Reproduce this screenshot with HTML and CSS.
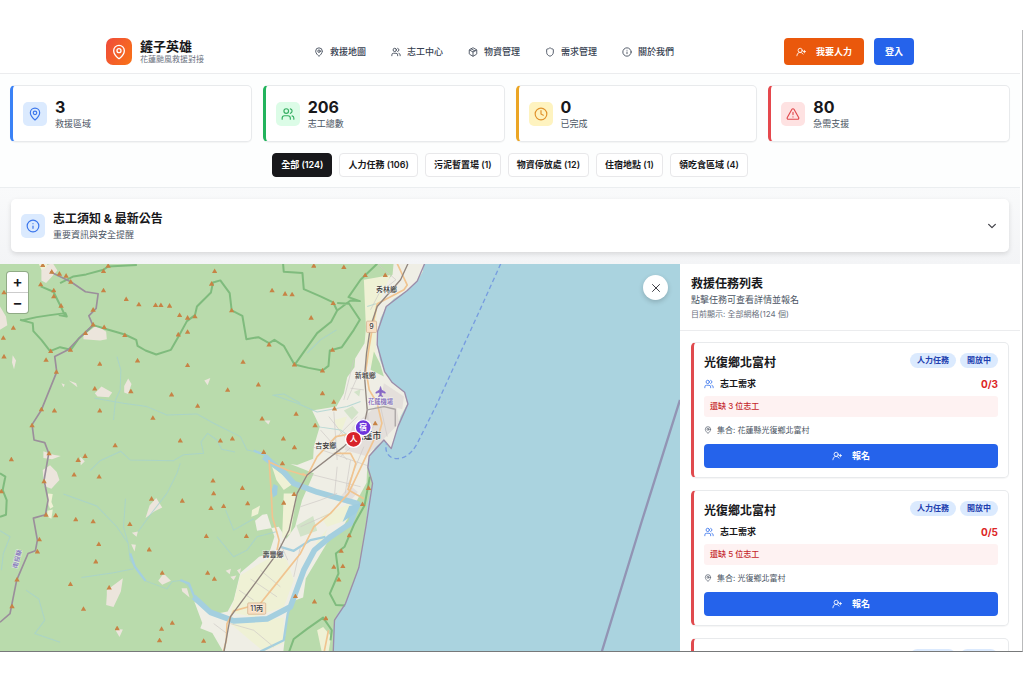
FILE: index.html
```html
<!DOCTYPE html>
<html lang="zh-Hant">
<head>
<meta charset="utf-8">
<meta name="viewport" content="width=device-width, initial-scale=1">
<title>鏟子英雄</title>
<link rel="stylesheet" href="styles.css">
</head>
<body>
<svg class="sprite" aria-hidden="true">
  <symbol id="i-pin" viewBox="0 0 24 24"><path d="M20 10c0 5-5.500 10.200-7.400 11.800a1 1 0 0 1-1.200 0C9.500 20.200 4 15 4 10a8 8 0 0 1 16 0"/><circle cx="12" cy="10" r="3"/></symbol>
  <symbol id="i-users" viewBox="0 0 24 24"><path d="M16 21v-2a4 4 0 0 0-4-4H6a4 4 0 0 0-4 4v2M22 21v-2a4 4 0 0 0-3-3.870M16 3.130a4 4 0 0 1 0 7.750"/><circle cx="9" cy="7" r="4"/></symbol>
  <symbol id="i-add" viewBox="0 0 24 24"><path d="M2 21a8 8 0 0 1 15-4M20 8v6M23 11h-6"/><circle cx="10" cy="8" r="5"/></symbol>
  <symbol id="i-box" viewBox="0 0 24 24"><path d="M11 21.700a2 2 0 0 0 2 0l7-4a2 2 0 0 0 1-1.700V8a2 2 0 0 0-1-1.700l-7-4a2 2 0 0 0-2 0l-7 4A2 2 0 0 0 3 8v8a2 2 0 0 0 1 1.700zM12 22V12M3.300 7 12 12l8.700-5M7.500 4.300l9 5.100"/></symbol>
  <symbol id="i-shield" viewBox="0 0 24 24"><path d="M20 13c0 5-3.500 7.500-7.700 9a1 1 0 0 1-.6 0C7.500 20.500 4 18 4 13V6a1 1 0 0 1 1-1c2 0 4.500-1.200 6.200-2.700a1.200 1.200 0 0 1 1.600 0C14.500 3.800 17 5 19 5a1 1 0 0 1 1 1z"/></symbol>
  <symbol id="i-info" viewBox="0 0 24 24"><circle cx="12" cy="12" r="10"/><path d="M12 16v-4M12 8h.01"/></symbol>
  <symbol id="i-clock" viewBox="0 0 24 24"><circle cx="12" cy="12" r="10"/><path d="M12 6v6l4 2"/></symbol>
  <symbol id="i-alert" viewBox="0 0 24 24"><path d="m21.700 18-8-14a2 2 0 0 0-3.500 0l-8 14A2 2 0 0 0 4 21h16a2 2 0 0 0 1.700-3M12 9v4M12 17h.01"/></symbol>
  <symbol id="i-down" viewBox="0 0 24 24"><path d="m4 8 8 8 8-8"/></symbol>
  <symbol id="i-x" viewBox="0 0 24 24"><path d="M19 5 5 19M5 5l14 14"/></symbol>
</svg>
<div class="app">
  <header class="header">
    <div class="header-inner">
      <a class="brand" href="#">
        <span class="brand-mark"><svg class="icon icon-lg"><use href="#i-pin"/></svg></span>
        <span class="brand-text"><strong class="brand-name">鏟子英雄</strong><span class="brand-sub">花蓮颱風救援對接</span></span>
      </a>
      <nav class="nav">
        <a href="#"><svg class="icon"><use href="#i-pin"/></svg>救援地圖</a>
        <a href="#"><svg class="icon"><use href="#i-users"/></svg>志工中心</a>
        <a href="#"><svg class="icon"><use href="#i-box"/></svg>物資管理</a>
        <a href="#"><svg class="icon"><use href="#i-shield"/></svg>需求管理</a>
        <a href="#"><svg class="icon"><use href="#i-info"/></svg>關於我們</a>
      </nav>
      <div class="actions">
        <button class="btn btn-orange"><svg class="icon"><use href="#i-add"/></svg>我要人力</button>
        <button class="btn btn-blue">登入</button>
      </div>
    </div>
  </header>

  <section class="summary">
    <div class="stats">
      <div class="stat blue"><span class="tile"><svg class="icon icon-md"><use href="#i-pin"/></svg></span><div><div class="stat-num">3</div><div class="stat-label">救援區域</div></div></div>
      <div class="stat green"><span class="tile"><svg class="icon icon-md"><use href="#i-users"/></svg></span><div><div class="stat-num">206</div><div class="stat-label">志工總數</div></div></div>
      <div class="stat amber"><span class="tile"><svg class="icon icon-md"><use href="#i-clock"/></svg></span><div><div class="stat-num">0</div><div class="stat-label">已完成</div></div></div>
      <div class="stat red"><span class="tile"><svg class="icon icon-md"><use href="#i-alert"/></svg></span><div><div class="stat-num">80</div><div class="stat-label">急需支援</div></div></div>
    </div>
    <div class="filters">
      <button class="filter active">全部 (124)</button>
      <button class="filter">人力任務 (106)</button>
      <button class="filter">污泥暫置場 (1)</button>
      <button class="filter">物資停放處 (12)</button>
      <button class="filter">住宿地點 (1)</button>
      <button class="filter">領吃食區域 (4)</button>
    </div>
  </section>

  <section class="notice-wrap">
    <button class="notice">
      <span class="tile tile-blue"><svg class="icon icon-md"><use href="#i-info"/></svg></span>
      <span class="notice-text"><strong class="notice-title">志工須知 &amp; 最新公告</strong><span class="notice-sub">重要資訊與安全提醒</span></span>
      <svg class="icon chevron"><use href="#i-down"/></svg>
    </button>
  </section>

  <main class="main">
    <div class="map">
      <svg class="map-canvas" viewBox="0 12 2037 1161" preserveAspectRatio="xMidYMid slice" role="img" aria-label="花蓮地圖">
        <defs>
          <marker id="peak" viewBox="0 0 14 13" refX="7" refY="7" markerWidth="16" markerHeight="15" markerUnits="userSpaceOnUse"><path class="peak" d="M7 0 14 12H0z"/></marker>
        </defs>
        <rect class="sea" y="12" width="2037" height="1161"/>
        <path class="forest" d="M0 0H1272L1266 36 1250 64 1220 92 1180 117 1157 140 1140 175 1131 215 1130 255 1138 300 1152 335 1175 368 1212 397 1220 432 1200 470 1190 505 1172 566 1150 540 1125 560 1106 588 1102 622 1115 655 1114 680 1100 735 1096 800 1089 850 1075 922 1052 990 1035 1030 1010 1062 999 1105 1000 1180H0z"/>
        <path class="urban" d="M1180 0 1176 44 1150 75 1127 105 1120 145 1098 195 1092 250 1064 296 1062 322 1040 352 1030 400 1008 440 935 452 958 500 940 560 938 596 890 615 870 612 940 640 905 720 884 800 858 836 835 800 770 812 764 782 786 764 800 762 822 830 806 880 776 890 720 938 700 1020 682 1054 640 1062 582 1024 606 1088 600 1104 636 1118 672 1180H848L862 1060 885 1020 908 1012 916 955 985 840 1030 796 1070 720 1098 668 1100 622 1106 588 1125 560 1150 540 1172 566 1190 505 1200 470 1220 432 1212 397 1175 368 1152 335 1138 300 1130 255 1131 215 1140 175 1157 140 1180 117 1220 92 1250 64 1266 36 1272 0z"/>
        <path class="field" d="M830 880 720 945 704 1010 690 1056 760 1070 850 1040 880 960 860 900zM690 1090 850 1072 848 1150 790 1174zM850 700 890 700 870 820 845 835zM960 770 1048 730 1040 780 980 800zM1090 60 1170 46 1130 140 1122 330 1094 300 1096 200zM1000 480 1040 470 1020 520zM815 620 880 670 850 690 828 660zM755 750l24-14-6 26-20 8z"/>
        <path class="forest" d="M1120 275 1138 310 1150 350 1110 330zM1125 465l24 10 10 40-14 5-20-24z"/>
        <path class="park" d="M1030 452l26-14 18 20-20 22zM1060 396l20-8-4 22zM888 796l50-28 12 44-50 18z"/>
        <path class="town" d="M1056 500l70-60 60-10 10 60-50 50-50 48-64-18zM1150 370l60 40-5 38-66-18zM1012 720l36-44 24 20-30 36z"/>
        <path class="field" d="M945 850l36-44-20 52zM950 1110l18-10 24 28-8 48h-20z"/>
        <path class="rock" d="M250 226l40-30 28 20 2 22-20 4-50-4zM284 400l20-20 32 18-10 14-34-2zM372 378l12-22 10 16-10 30-12-4zM128 630l22-14 20 20 8 24-24 26-22-8zM468 714l18 28-24 12-26 20 12-38zM320 990l40-30 8-6-6 40-22 46-22-6 2-30zM474 962l16-22 22 22-26 12zM544 984l16 0 8 28-22-18zM124 22l34-12 14 22-34 38-14-8zM130 574l30 10 22 4-26 10-26-4zM395 818l18-4-4 16zM393 852l14 2-4 20zM612 362l18-8-8 22zM184 370l10 4-4 8zM206 362l22 8 4 12zM344 1106l24 2-10 22zM792 482l18 0-6 12zM240 590l14 14-12 12zM0 140l18 30 4 26-22 14zM38 286l10 16-6 26-6-20zM676 932l16-6-4 16zM710 930l12-6-4 18zM690 950l18-4-8 14z"/>
        <path class="field" d="M144 700l14 2-4 24 6 14-10 6-8-20zM142 752l16-4-4 28-12-6zM114 8l28 4-4 12-14 6z"/>

        <path class="stream" d="M284 415 370 430 440 440 500 465 590 462 640 490 720 530 740 570 790 580M350 290 362 330 360 390 346 420 340 480M270 632 300 602 362 574 390 600 520 602 550 584 610 580 602 546 622 520 650 540 664 568 704 576M190 702 290 738 350 800 384 850 390 900 436 962M436 962 500 986 516 964 546 960 570 984M384 850 370 800 376 716M414 814 450 764 500 700 530 640 540 610M244 952 340 938 400 926M78 990 116 1016 134 1080 104 1120 180 1146M650 830 700 890 740 870 770 830 830 814M676 750 700 810 760 776M816 406 850 402 900 430M0 812 30 830 10 880 4 930M1008 210 960 240 920 280M820 406 890 430 950 456 1040 440 1080 425M950 500 1020 510 1060 540M1100 140 1126 132"/>
        <path class="river-s" d="M390 880 404 920 436 962M540 960 566 970 582 1010M760 572 800 588 850 640M840 860 880 872 930 840 975 830M780 1174 850 1140 862 1060 900 960"/>
        <path class="river" d="M790 590 850 636 880 670 950 696 1070 730 1050 790 990 830 942 870 910 930 870 1040 800 1076 700 1082 630 1056 580 1010"/>
        <path class="lake" d="M820 672l12 6-2 26-12 8-4-22zM1046 738l38-10-14 28-44 30z"/>

        <path class="minor" d="M1130 12 1186 60 1136 100 1110 150M1000 455 1010 600M960 510 1040 600M985 470 1056 560M935 560 1110 620M920 640 1080 680M1010 620 1002 706M1050 600 1034 700M780 930 840 980M750 956 830 1010M716 990 760 1020M690 1090 760 1110 820 1160M640 1090 680 1120M900 740 960 720 1010 700M900 860 880 950M1060 300 1030 420M1080 330 1040 420M1140 440 1160 530M1100 440 1105 520M1050 385 1090 390M1020 590 1120 500M900 800 990 760M840 850 862 900M970 570 1070 470M1090 560 1040 680"/>
        <path class="road" d="M1190 12 1220 76 1210 90 1130 132 1118 190 1106 260 1096 330 1106 390 1130 430 1144 490 1130 540M806 600 812 690 816 770 836 840 830 870M806 606 860 630 920 648 950 590 1006 530 1060 520M920 648 906 640M1120 540 1044 700 990 760 940 800 900 880 820 980 780 1030 700 1052 680 1090 678 1140 668 1180M1044 690 1090 716M1000 580 1050 580 1066 610 1042 690M984 1110 970 1180"/>
        <path class="rail" d="M1222 12 1200 60 1130 140 1110 200 1098 280 1092 350 1100 450 1090 500 1030 560 920 645 890 700 866 810 830 880 690 1070 670 1180"/>
        <path class="rail light" d="M1100 450 1150 440 1184 448 1184 500"/>

        <path class="boundary" d="M60 180 98 190 100 214 124 240 150 274 180 262 212 270 236 236 280 196 312 206 374 224 408 240 412 258 436 272 468 284 512 270 536 228 560 184 584 166 590 140 632 98 638 68 660 62 688 100 694 152 726 168 738 238 774 232 806 250 822 240 850 258 882 314 924 324 966 332 984 318 988 272 1024 262 1060 210 1078 180 1046 132 1010 130M848 12 850 36 906 40 910 88 960 110 998 128 1010 152 992 186 950 220 882 316M1010 152 1050 122 1078 124 1044 112 1080 60 1130 12M64 182 110 172 150 166 196 160 200 170 176 166M196 170 182 140 160 96 122 80M180 70 220 50 258 44 310 30 324 20 410 16M0 640 16 650 8 690 20 720 18 764 0 770M864 1180 880 1136 920 1106 968 1072 994 1110 990 1140M1108 650 1092 736 1062 790 1032 860 1006 880 1014 940 988 1000 1006 1034 1034 1036"/>
        <path class="admin" d="M150 36 212 66 256 96 294 102 288 146 266 168 278 196 236 236 204 270 164 290 170 336 124 450 96 494 102 540 134 548 146 580 132 660 144 720 136 764 100 774 112 840 106 872 84 880 50 960 30 1060 0 1086"/>
        <path class="shore" d="M1272 12 1250 64 1220 92 1157 140 1131 215 1130 255 1152 335 1175 368 1212 397 1222 432 1192 500 1172 566 1150 540 1106 588 1102 622 1116 670 1096 800 1075 922 1035 1030 1002 1080 998 1180"/>
        <path class="maritime" d="M2037 420 1922 785 1803 1173"/>
        <path class="ferry" d="M1500 12 1440 145 1310 430 1250 550Q1220 605 1175 594 1150 580 1158 550"/>

        <path class="peaks" d="M128 16 155 36 178 42 198 48 212 66 122 74 161 92 161 110 183 138 12 98 310 34 324 18 310 92 378 118 416 134 466 136 482 136 508 138 538 166 562 174 584 170 534 224 562 216 634 72 643 34 694 152 815 92 854 102 875 104 279 150 279 194 312 202 256 220 374 226 40 204 10 234 12 290 152 274 211 270 138 300 169 336 299 312 412 302 562 316 728 306 806 254 882 314 284 386 392 394 514 404 592 438 682 390 774 374 124 448 163 452 299 452 458 474 96 496 540 542 660 542 696 536 785 476 887 462 345 556 147 580 255 588 234 600 34 598 222 644 297 650 132 664 638 662 640 700 726 684 742 730 670 738 632 744 546 722 454 716 4 694 138 764 167 766 227 778 279 784 389 792 618 828 738 828 447 868 296 852 118 838 112 874 287 904 486 938 622 938 642 956 211 972 327 982 51 958 36 1038 250 1046 516 1088 484 1106 351 1104 478 1140 610 1142 790 576 849 536 882 562 846 610 850 728 881 702 885 1008 940 18 1030 22 1094 46 1154 46 932 174 998 130 996 270 966 332 966 400 1000 426 1002 446 944 496 1124 490 1104 684 1086 732 1046 826 1022 872 1000 920 1027 918 1015 958 942 1024 976 1074"/>

        <g class="shield-tag"><rect x="1098" y="184" width="30" height="34" rx="3"/><rect x="742" y="1028" width="54" height="34" rx="3"/></g>
        <g class="labels">
          <text x="1113" y="208">9</text><text x="769" y="1053">11丙</text>
          <text x="1158" y="96">秀林鄉</text><text x="1094" y="354">新城鄉</text><text x="976" y="564">吉安鄉</text><text x="818" y="890">壽豐鄉</text>
          <text class="city" x="1102" y="538">花蓮市</text>
          <text class="violet" x="1140" y="432">花蓮機場</text>
          <text class="violet" transform="translate(58 898) rotate(-75)">南投縣</text>
        </g>
        <path class="plane" d="M1140 380l3 10 11 7v3l-11-3-1 8 4 3v2l-6-2-6 2v-2l4-3-1-8-11 3v-3l11-7z"/>
        <circle class="pin violet-pin" cx="1088" cy="503" r="24"/><text class="pin-text" x="1088" y="511">宿</text>
        <circle class="pin red-pin" cx="1059" cy="538" r="24"/><text class="pin-text" x="1059" y="546">人</text>
      </svg>
      <div class="zoom"><button aria-label="放大">+</button><button aria-label="縮小">−</button></div>
      <button class="close" aria-label="關閉"><svg class="icon icon-md"><use href="#i-x"/></svg></button>
    </div>

    <aside class="side">
      <div class="side-head">
        <h2>救援任務列表</h2>
        <p>點擊任務可查看詳情並報名</p>
        <p class="tiny">目前顯示: 全部網格(124 個)</p>
      </div>
      <div class="tasks">
        <article class="task">
          <div class="row"><h3>光復鄉北富村</h3><div class="badges"><span class="badge">人力任務</span><span class="badge">開放中</span></div></div>
          <div class="row need"><span class="need-label"><svg class="icon"><use href="#i-users"/></svg>志工需求</span><span class="count">0/3</span></div>
          <div class="short">還缺 3 位志工</div>
          <div class="place"><svg class="icon icon-sm"><use href="#i-pin"/></svg>集合: 花蓮縣光復鄉北富村</div>
          <button class="btn btn-blue join"><svg class="icon"><use href="#i-add"/></svg>報名</button>
        </article>
        <article class="task">
          <div class="row"><h3>光復鄉北富村</h3><div class="badges"><span class="badge">人力任務</span><span class="badge">開放中</span></div></div>
          <div class="row need"><span class="need-label"><svg class="icon"><use href="#i-users"/></svg>志工需求</span><span class="count">0/5</span></div>
          <div class="short">還缺 5 位志工</div>
          <div class="place"><svg class="icon icon-sm"><use href="#i-pin"/></svg>集合: 光復鄉北富村</div>
          <button class="btn btn-blue join"><svg class="icon"><use href="#i-add"/></svg>報名</button>
        </article>
        <article class="task">
          <div class="row"><h3></h3><div class="badges"><span class="badge badge-wide"></span><span class="badge"></span></div></div>
        </article>
      </div>
    </aside>
  </main>
</div>
</body>
</html>
```
FILE: styles.css
```css
* { box-sizing: border-box; }
body {
  margin: 0;
  height: 100vh;
  padding: 30px 1px 31px 0;
  display: flex;
  background: #fff;
  color: #18181b;
  font: 9px/14px Inter, "Noto Sans CJK TC", sans-serif;
}
button { font: inherit; color: inherit; border: 0; background: none; padding: 0; cursor: pointer; }
a { color: inherit; text-decoration: none; }
h2, h3, p { margin: 0; }
.sprite { position: absolute; width: 0; height: 0; }
.icon { width: 10px; height: 10px; flex: none; fill: none; stroke: currentColor; stroke-width: 2; stroke-linecap: round; stroke-linejoin: round; }
.icon-sm { width: 8px; height: 8px; }
.icon-md { width: 14px; height: 14px; }
.icon-lg { width: 16px; height: 16px; }

.app {
  flex: 1;
  min-width: 0;
  display: flex;
  flex-direction: column;
  padding-right: 2px;
  border-right: 1px solid #b9babb;
  border-bottom: 1px solid #77797a;
}

/* Header */
.header { border-bottom: 1px solid #ebecee; }
.header-inner { max-width: 808px; margin: 0 auto; padding: 8px 0; display: flex; align-items: center; justify-content: space-between; }
.brand { display: flex; align-items: center; gap: 8px; }
.brand-mark { width: 26px; height: 27px; border-radius: 7px; display: grid; place-items: center; color: #fff; background: linear-gradient(120deg, #ef4b3b, #f97316); }
.brand-text { display: flex; flex-direction: column; }
.brand-name { font-size: 13px; line-height: 16px; font-weight: 700; }
.brand-sub { font-size: 8px; line-height: 11px; color: #6b7280; }
.nav { display: flex; gap: 25px; font-weight: 500; color: #374151; }
.nav a { display: flex; align-items: center; gap: 6px; }
.actions { display: flex; gap: 10px; }
.btn { display: flex; align-items: center; justify-content: center; gap: 10px; border-radius: 4px; color: #fff; font-weight: 600; }
.btn-orange { background: #ea580c; padding: 6px 12px; height: 27px; }
.btn-blue { background: #2563eb; padding: 5px 11px; }

/* Stats and filters */
.summary { padding: 11px 10px 10px; background: #fdfefe; border-bottom: 1px solid #ebeef0; }
.stats { display: grid; grid-template-columns: repeat(4, 1fr); gap: 11px; }
.stat { display: flex; align-items: center; gap: 8px; height: 57px; padding-left: 10px; background: #fff; border: 1px solid #e8eaec; border-left: 3px solid; border-radius: 5px; box-shadow: 0 1px 1px #0000000a; }
.tile { width: 24px; height: 24px; flex: none; border-radius: 5px; display: grid; place-items: center; }
.stat-num { font-size: 16px; line-height: 20px; font-weight: 700; }
.stat-label { line-height: 14px; color: #4b5563; }
.blue { border-left-color: #3b82f6; }
.blue .tile, .tile-blue { background: #dbeafe; color: #3b76ec; }
.green { border-left-color: #22b35c; }
.green .tile { background: #dcfce7; color: #35ae62; }
.amber { border-left-color: #eba524; }
.amber .tile { background: #fef3c0; color: #e0922c; }
.red { border-left-color: #e5484d; }
.red .tile { background: #fee2e2; color: #e04a4e; }
.filters { display: flex; justify-content: center; gap: 7px; margin-top: 11px; }
.filter { height: 24px; padding: 0 8px; background: #fff; border: 1px solid #e8e8ea; border-radius: 4px; font-weight: 600; white-space: nowrap; }
.filter.active { background: #18181b; border-color: #18181b; color: #fff; }

/* Announcement */
.notice-wrap { padding: 11px 11px 12px; background: linear-gradient(#f9fafb, #f3f4f6); }
.notice { width: 100%; height: 53px; padding: 0 12px 0 10px; display: flex; align-items: center; gap: 8px; text-align: left; background: #fff; border-radius: 5px; box-shadow: 0 2px 5px #0000001f; }
.notice-text { flex: 1; display: flex; flex-direction: column; }
.notice-title { font-size: 12px; line-height: 18px; font-weight: 700; }
.notice-sub { line-height: 14px; color: #4b5563; }
.chevron { stroke-width: 3; color: #3f3f46; }

/* Map */
.main { flex: 1; min-height: 0; display: grid; grid-template-columns: 2fr 1fr; }
.map { position: relative; overflow: hidden; }
.map-canvas { display: block; width: 100%; height: 100%; }
.map-canvas path { fill: none; stroke-linejoin: round; }
.sea { fill: #aad3df; }
.map-canvas .forest { fill: #b9dbac; }
.map-canvas .urban { fill: #efeee5; }
.map-canvas .field { fill: #eff1d5; }
.map-canvas .park { fill: #d2e3c8; }
.map-canvas .town { fill: #e4dfdb; }
.map-canvas .rock { fill: #ece5dc; }
.map-canvas .lake { fill: #9fcddf; }
.stream { stroke: #a6d2cf; stroke-width: 3; opacity: .75; }
.river-s { stroke: #a4cfdf; stroke-width: 7; }
.river { stroke: #a4cfdf; stroke-width: 17; }
.minor { stroke: #cdc9c6; stroke-width: 2; }
.road { stroke: #f0c490; stroke-width: 5; }
.rail { stroke: #91867f; stroke-width: 4; }
.rail.light { stroke: #aaa5a5; }
.boundary { stroke: #7fbb7d; stroke-width: 6; }
.admin { stroke: #9b8e9b; stroke-width: 5; }
.shore { stroke: #9c8daa; stroke-width: 4; }
.maritime { stroke: #9294b4; stroke-width: 7; }
.ferry { stroke: #779de0; stroke-width: 4; stroke-dasharray: 14 9; }
.peaks { stroke: none; marker-start: url(#peak); marker-mid: url(#peak); marker-end: url(#peak); }
.map-canvas .peak { fill: #c78345; }
.shield-tag { fill: #f8dfc3; stroke: #cfac8a; stroke-width: 2; }
.labels { font-size: 21px; font-weight: 500; text-anchor: middle; fill: #38383a; paint-order: stroke; stroke: #ffffff99; stroke-width: 3; }
.labels .city { font-size: 27px; }
.labels .violet { font-size: 19px; fill: #7a66b8; }
.map-canvas .plane { fill: #8565c4; stroke: #8565c4; stroke-width: 2; }
.pin { stroke: #fff; stroke-width: 4; }
.violet-pin { fill: #6d35dc; }
.red-pin { fill: #d8232a; }
.pin-text { font-size: 23px; font-weight: 700; text-anchor: middle; fill: #fff; }
.zoom { position: absolute; top: 8px; left: 7px; width: 21px; display: flex; flex-direction: column; background: #fff; border-radius: 3px; box-shadow: 0 0 0 1px #00000038; }
.zoom button { height: 20px; font-size: 15px; font-weight: 600; }
.zoom button + button { border-top: 1px solid #ccc; height: 21px; }
.close { position: absolute; top: 11px; right: 12px; width: 25px; height: 25px; display: grid; place-items: center; background: #fff; border-radius: 50%; box-shadow: 0 2px 5px #00000030; color: #3f3f46; }
.close .icon { width: 12px; height: 12px; }

/* Task list */
.side { min-height: 0; display: flex; flex-direction: column; overflow: hidden; background: #fff; }
.side-head { padding: 11px 11px 9px; border-bottom: 1px solid #ebecee; color: #4b5563; }
.side-head h2 { font-size: 12px; line-height: 18px; color: #18181b; }
.side-head .tiny { font-size: 8px; color: #6b7280; }
.tasks { flex: 1; min-height: 0; overflow: hidden; padding: 11px 11px 0; }
.task { min-height: 136px; margin-bottom: 12px; padding: 10px 10px 0; border: 1px solid #e8eaec; border-left: 3px solid #e04a4e; border-radius: 5px; box-shadow: 0 1px 1px #0000000a; }
.row { display: flex; align-items: center; justify-content: space-between; }
.task h3 { font-size: 12px; line-height: 20px; }
.badges { display: flex; gap: 4px; align-self: flex-start; }
.badge { min-width: 38px; height: 15px; padding: 0 7px; border-radius: 8px; background: #dbeafe; color: #1e40af; font-size: 8px; line-height: 15px; font-weight: 600; }
.badge-wide { min-width: 46px; }
.need { height: 14px; margin-top: 4px; font-weight: 600; }
.need-label { display: flex; align-items: center; gap: 6px; }
.need .icon { color: #3b76ec; }
.count { font-size: 10px; font-weight: 700; color: #dc2626; }
.short { margin-top: 5px; padding: 3px 6px; height: 21px; background: #fef2f2; border-radius: 3px; color: #c5282c; font-size: 8px; font-weight: 500; }
.place { display: flex; align-items: center; gap: 5px; margin: 6px 0 7px; font-size: 8px; color: #4b5563; }
.join { width: 100%; height: 24px; }
```
